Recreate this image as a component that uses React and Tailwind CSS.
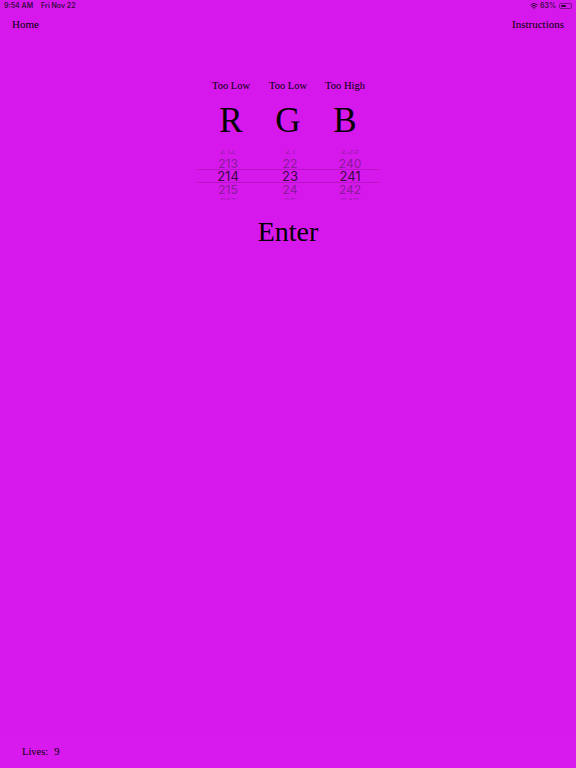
import { Wifi } from 'lucide-react';

const serif = { fontFamily: '"Liberation Serif", "DejaVu Serif", serif' };

// picker wheel rows around the selected value
function Wheel({ values, selected, offset }) {
    return (
        <div className={`flex w-[56px] flex-col items-center ${offset}`}>
            {values.map((v, i) => {
                const d = Math.abs(i - selected);
                const tone =
                    d === 0
                        ? 'text-[#3a0a44] text-[13px]'
                        : d === 1
                        ? 'text-[#8a1a9c] text-[12px]'
                        : 'text-[#a31bb8] text-[10px]';
                return (
                    <div key={v} className={`h-[13px] leading-[13px] ${tone}`}>
                        {v}
                    </div>
                );
            })}
        </div>
    );
}

export default function App() {
    return (
        <div className="flex h-[768px] w-[576px] flex-col bg-[#d718ed] text-black" style={serif}>
            {/* status bar */}
            <div className="flex h-[12px] items-center justify-between px-[4px] text-[7px] font-semibold text-[#3a0a44]" style={{ fontFamily: 'Inter, "Noto Sans", sans-serif' }}>
                <div className="flex gap-[8px]">
                    <span>9:54 AM</span>
                    <span>Fri Nov 22</span>
                </div>
                <div className="flex items-center gap-[2px]">
                    <Wifi className="h-[8px] w-[8px]" strokeWidth={3} />
                    <span>63%</span>
                    <div className="ml-[1px] flex h-[6px] w-[13px] items-center rounded-[2px] border border-[#3a0a44]/60 p-[1px]">
                        <div className="h-full w-[60%] rounded-[1px] bg-[#2a0630]" />
                    </div>
                </div>
            </div>

            {/* nav */}
            <div className="flex h-[24px] items-center justify-between px-[12px] text-[11px]">
                <span>Home</span>
                <span>Instructions</span>
            </div>

            <div className="mt-[43px] flex flex-col items-center">
                <div className="flex text-[10.5px] leading-[14px]">
                    <div className="w-[57px] text-center">Too Low</div>
                    <div className="w-[57px] text-center">Too Low</div>
                    <div className="w-[57px] text-center">Too High</div>
                </div>
                <div className="mt-[8px] flex text-[35px] leading-[40px]">
                    <div className="w-[57px] text-center">R</div>
                    <div className="w-[57px] text-center">G</div>
                    <div className="w-[57px] text-center">B</div>
                </div>

                <div className="relative mt-[9px] h-[50px] w-[182px] overflow-hidden" style={{ fontFamily: 'Inter, "Noto Sans", sans-serif' }}>
                    <div className="absolute left-0 right-0 top-[19px] h-[14px] border-y border-[#b815c9]" />
                    <div className="-mt-[6px] flex justify-center">
                        <Wheel values={[212, 213, 214, 215, 216]} selected={2} offset="ml-[2px]" />
                        <Wheel values={[21, 22, 23, 24, 25]} selected={2} offset="ml-[6px]" />
                        <Wheel values={[239, 240, 241, 242, 243]} selected={2} offset="ml-[4px]" />
                    </div>
                </div>

                <div className="mt-[12px] text-[28px] leading-[40px]">Enter</div>
            </div>

            <div className="flex-1" />

            {/* bottom toolbar */}
            <div className="flex h-[32px] items-center bg-[#d91aee] px-[22px] text-[10.5px]">
                <span>Lives:</span>
                <span className="ml-[6px]">9</span>
            </div>
        </div>
    );
}
